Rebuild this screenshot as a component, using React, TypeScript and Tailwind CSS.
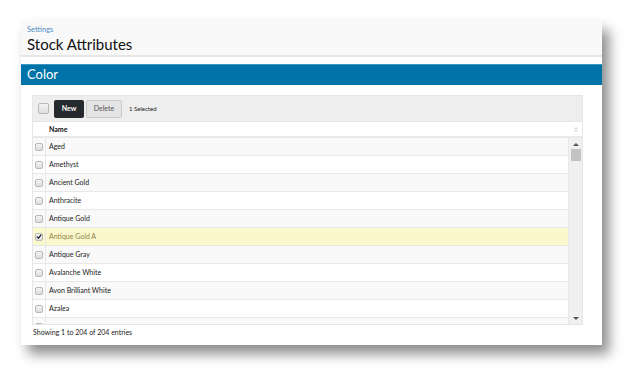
import { useState } from 'react';

const colors = [
  'Aged',
  'Amethyst',
  'Ancient Gold',
  'Anthracite',
  'Antique Gold',
  'Antique Gold A',
  'Antique Gray',
  'Avalanche White',
  'Avon Brilliant White',
  'Azalea',
  '',
];

function Check({ checked, big }: { checked?: boolean; big?: boolean }) {
  return (
    <span
      className={`flex items-center justify-center rounded-[2px] border border-[#b9b9b9] bg-gradient-to-b from-[#f4f4f4] to-[#dedede] ${
        big ? 'w-[11px] h-[11px]' : 'w-[8px] h-[8px]'
      }`}
    >
      {checked && (
        <svg width="7" height="7" viewBox="0 0 10 10">
          <path d="M1.5 5.2 L4 7.8 L8.8 1.8" fill="none" stroke="#111" strokeWidth="2" />
        </svg>
      )}
    </span>
  );
}

export default function App() {
  const [selected] = useState('Antique Gold A');

  return (
    <div className="w-[644px] h-[387px] bg-white pl-[21px] pt-[21px] font-['Lato',sans-serif]">
      <div className="w-[581px] h-[324px] bg-white flex flex-col shadow-[7px_9px_12px_rgba(0,0,0,0.45)]">
        {/* Page header */}
        <div className="h-[36px] bg-[#f9f9f9] border-b-2 border-[#e6e6e6] px-[6px] pt-[5px] leading-none">
          <div className="text-[7.5px] text-[#4f8cc4]">Settings</div>
          <div className="text-[15px] text-[#111] mt-[3px]">Stock Attributes</div>
        </div>

        {/* Section bar */}
        <div className="mt-[7px] h-[21px] bg-[#0074a8] border-t border-[#3f96c0] px-[6px] flex items-center">
          <span className="text-white text-[13px]">Color</span>
        </div>

        {/* Table */}
        <div className="pl-[11px] pr-[19px] pt-[10px]">
          <div className="border border-[#e6e6e6]">
            <div className="h-[25px] bg-[#eeeeee] flex items-center pl-[5px]">
              <Check big />
              <button className="ml-[5px] h-[18px] w-[30px] bg-[#262a2e] text-white text-[7px] font-bold rounded-[2px]">
                New
              </button>
              <button className="ml-[2px] h-[18px] w-[36px] bg-[#e4e4e4] border border-[#c9c9c9] text-[#555] text-[7px] rounded-[2px]">
                Delete
              </button>
              <span className="ml-[7px] text-[6px] text-[#222]">1 Selected</span>
            </div>
            <div className="h-[17px] bg-white border-t border-[#e6e6e6] border-b-2 border-b-[#e9e9e9] flex items-center pl-[16px] pr-[4px]">
              <span className="text-[7px] font-bold text-[#111]">Name</span>
              <span className="ml-auto flex flex-col gap-[1px] opacity-40">
                <span className="w-0 h-0 border-x-[2px] border-x-transparent border-b-[2px] border-b-[#999]" />
                <span className="w-0 h-0 border-x-[2px] border-x-transparent border-t-[2px] border-t-[#999]" />
              </span>
            </div>
            <div className="flex h-[186px]">
              <div className="flex-1 overflow-hidden">
                {colors.map((name, i) => {
                  const isSel = name === selected;
                  return (
                    <div
                      key={i}
                      className={`h-[18px] flex border-b border-[#e8e8e8] border-r border-r-[#e8e8e8] ${
                        isSel ? 'bg-[#fbf8cd]' : i % 2 === 0 ? 'bg-[#f9f9f9]' : 'bg-white'
                      }`}
                    >
                      <div className="w-[13px] flex items-center justify-center border-r border-[#e8e8e8] shrink-0">
                        <Check checked={isSel} />
                      </div>
                      <div
                        className={`flex items-center pl-[3px] text-[7px] ${
                          isSel ? 'text-[#8f8447]' : 'text-[#222]'
                        }`}
                      >
                        {name}
                      </div>
                    </div>
                  );
                })}
              </div>
              {/* Scrollbar */}
              <div className="w-[13px] bg-[#f0f0f0] flex flex-col items-center pt-[5px] pb-[4px]">
                <span className="w-0 h-0 border-x-[3px] border-x-transparent border-b-[3px] border-b-[#555]" />
                <span className="mt-[3px] w-[10px] h-[12px] bg-[#c2c2c2]" />
                <span className="mt-auto w-0 h-0 border-x-[3px] border-x-transparent border-t-[3px] border-t-[#555]" />
              </div>
            </div>
          </div>
          <div className="mt-[2px] text-[7px] text-[#222] pl-[1px]">Showing 1 to 204 of 204 entries</div>
        </div>
      </div>
    </div>
  );
}
